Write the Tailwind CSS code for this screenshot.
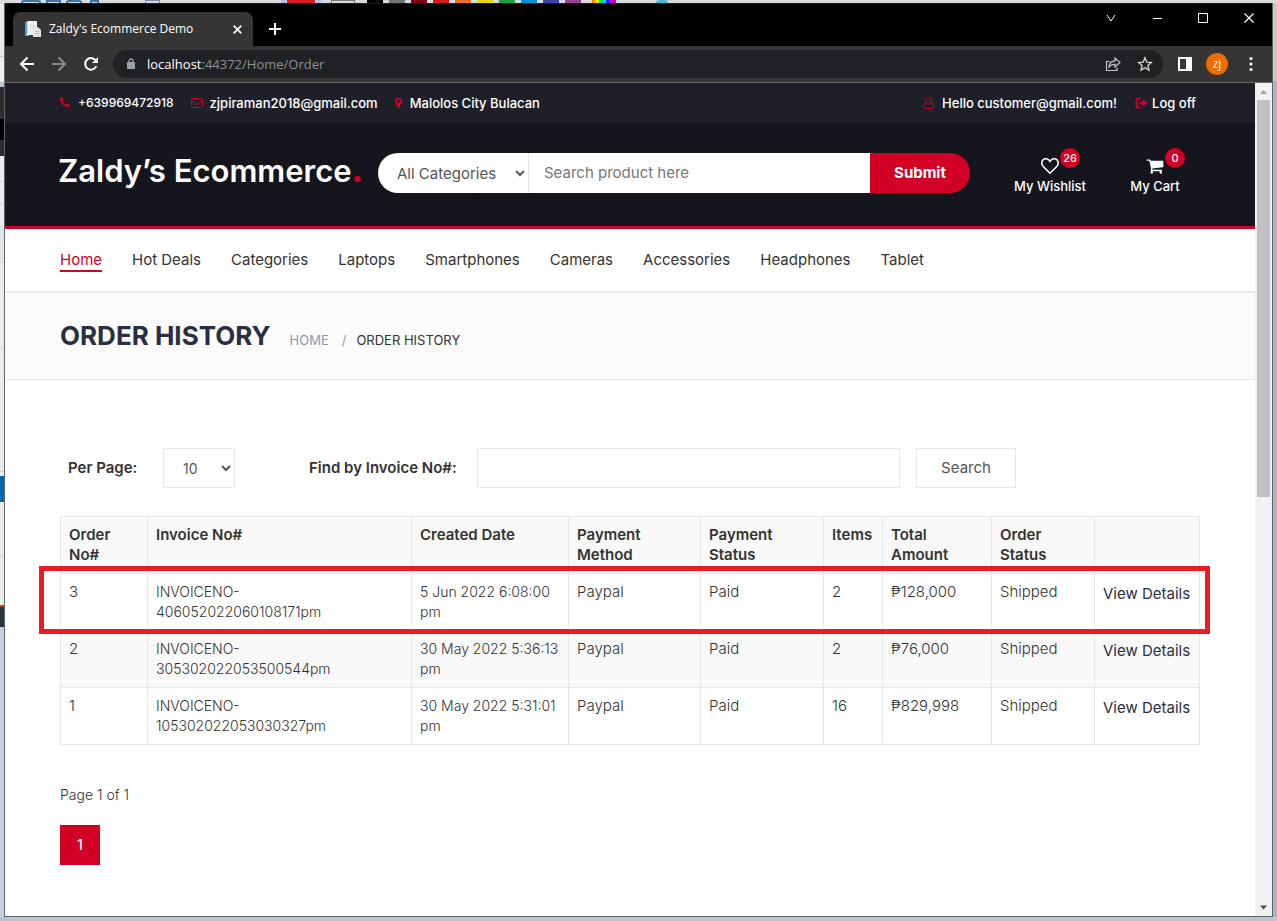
<!DOCTYPE html>
<html lang="en">
<head>
<meta charset="utf-8">
<meta name="viewport" content="width=device-width, initial-scale=1">
<title>Zaldy's Ecommerce Demo</title>
<script src="https://cdn.jsdelivr.net/npm/@tailwindcss/browser@4"></script>
</head>
<body class="flex min-h-screen flex-col bg-[#b9c3d2] font-['Inter',sans-serif] text-[15px] leading-5 text-[#333333]">

<!-- Slice of the paint program behind the browser -->
<div class="flex h-[3px] shrink-0 overflow-hidden bg-[#d9dadd]" aria-hidden="true">
  <div class="ml-[21px] h-[3px] w-5 rounded-t-full border-2 border-b-0 border-[#3b74a8]"></div>
  <div class="ml-[5px] h-[3px] w-[15px] border-2 border-b-0 border-[#3b74a8]"></div>
  <div class="ml-[5px] h-[3px] w-4 rounded-t border-2 border-b-0 border-[#3b74a8]"></div>
  <div class="ml-2 h-[3px] w-[9px] border-2 border-b-0 border-[#3b74a8]"></div>
  <div class="ml-[46px] h-[3px] w-[15px] border border-b-0 border-[#7a8ba8]"></div>
  <div class="ml-[121px] h-[3px] w-[5px] bg-[#a9c4e4]"></div>
  <div class="ml-[1px] h-[3px] w-7 bg-[#d61a20]"></div>
  <div class="ml-[1px] h-[3px] w-[5px] bg-[#a9c4e4]"></div>
  <div class="ml-[10px] h-[3px] w-6 border border-b-0 border-[#777777]"></div>
  <div class="ml-3 h-[3px] w-4 bg-black"></div>
  <div class="ml-[6px] h-[3px] w-4 bg-[#747474]"></div>
  <div class="ml-[6px] h-[3px] w-4 bg-[#7b0016]"></div>
  <div class="ml-[6px] h-[3px] w-4 bg-[#d61a20]"></div>
  <div class="ml-[6px] h-[3px] w-4 bg-[#e87324]"></div>
  <div class="ml-[6px] h-[3px] w-4 bg-[#e8da00]"></div>
  <div class="ml-[6px] h-[3px] w-4 bg-[#1f9e48]"></div>
  <div class="ml-[6px] h-[3px] w-4 bg-[#0099d6]"></div>
  <div class="ml-[6px] h-[3px] w-4 bg-[#3b43b3]"></div>
  <div class="ml-[6px] h-[3px] w-4 bg-[#964392]"></div>
  <div class="ml-[11px] flex h-[3px] w-6"><i class="flex-1 bg-[#ff8800]"></i><i class="flex-1 bg-[#ffee00]"></i><i class="flex-1 bg-[#22dd00]"></i><i class="flex-1 bg-[#00ddcc]"></i><i class="flex-1 bg-[#0022ff]"></i><i class="flex-1 bg-[#cc00ee]"></i><i class="flex-1 bg-[#ee0066]"></i></div>
  <div class="ml-10 h-[3px] w-3 rounded-t-full bg-[#4bbcd4]"></div>
</div>

<div class="flex flex-1">
  <!-- Slice of the windows to the left -->
  <div class="flex w-1 shrink-0 flex-col overflow-hidden bg-[#c5cfde]" aria-hidden="true">
    <div class="h-[53px] shrink-0 bg-[#e6e9ee]"></div>
    <div class="h-[26px] shrink-0 border-t border-[#c9ccd2] bg-[#eceef2]"></div>
    <div class="h-[5px] shrink-0 bg-[#b8c4d9]"></div>
    <div class="h-8 shrink-0 bg-[#2c2c2c]"></div>
    <div class="h-[21px] shrink-0 bg-black"></div>
    <div class="h-4 shrink-0 bg-[#2c2c2c]"></div>
    <div class="h-[26px] shrink-0 border-b border-[#d0d5d9] bg-[#e9eced]"></div>
    <div class="h-[23px] shrink-0 border-b border-[#d0d5d9] bg-[#e9eced]"></div>
    <div class="h-[22px] shrink-0 border-b border-[#d0d5d9] bg-[#e9eced]"></div>
    <div class="h-9 shrink-0 border-b border-[#d0d5d9] bg-[#dfe7eb]"></div>
    <div class="h-[86px] shrink-0 border-b border-[#cfd2d6] bg-[#eaebec]"></div>
    <div class="h-[123px] shrink-0 border-b border-[#cfd2d6] bg-[#eaebec]"></div>
    <div class="h-1 shrink-0 bg-[#eaebec]"></div>
    <div class="h-[26px] shrink-0 bg-[#0067b1]"></div>
    <div class="h-[55px] shrink-0 border-b border-[#cfd2d6] bg-[#eaebec]"></div>
    <div class="h-12 shrink-0 bg-[#eaebec]"></div>
    <div class="h-[2px] shrink-0 bg-[#b9481c]"></div>
    <div class="h-5 shrink-0 bg-[#24363d]"></div>
  </div>

  <!-- Browser window -->
  <div class="flex min-w-0 flex-1 flex-col border-r border-b border-l border-[#5f646b] bg-[#353535]">
    <div class="flex h-[43px] items-end border-t border-[#1c1c1c] bg-black pl-2 font-['Open_Sans',sans-serif]">
      <div class="flex h-[34px] w-60 items-center rounded-t-lg bg-[#353535] pr-2 pl-3 text-[12px] text-white">
        <svg class="h-4 w-4" viewBox="0 0 16 16" aria-hidden="true"><path d="M0 1h4v14H0z" fill="#5d9fcb"/><path d="M3 0h9v14H3z" fill="#f2f2f2"/><path d="M2 0h1v15H2z" fill="#c5dff0"/><path d="M5 4h5v1H5zM5 6h3v1H5z" fill="#c8cdd1"/><path d="M8 6h5l3 3v7H8z" fill="#dfe3e6"/><path d="M10 10h4v1h-4zM10 12h4v1h-4z" fill="#b8bfc5"/></svg>
        <span class="ml-2 flex-1 whitespace-nowrap">Zaldy's Ecommerce Demo</span>
        <button type="button" aria-label="Close tab" class="flex h-4 w-4 items-center justify-center"><svg class="h-[9px] w-[9px]" viewBox="0 0 9 9" stroke="#fff" stroke-width="1.7"><path d="M.7.7l7.6 7.6M8.3.7L.7 8.3"/></svg></button>
      </div>
      <button type="button" aria-label="New tab" class="mb-[11px] ml-4"><svg class="h-3 w-3" viewBox="0 0 12 12" stroke="#fff" stroke-width="2"><path d="M6 0v12M0 6h12"/></svg></button>
      <div class="mb-[23px] ml-auto flex items-center gap-9 pr-[18px]">
        <button type="button" aria-label="Search tabs"><svg class="h-[10px] w-[10px]" viewBox="0 0 10 10" fill="none" stroke="#fff"><path d="M1 2l4 6 4-6"/></svg></button>
        <button type="button" aria-label="Minimize"><svg class="h-[10px] w-[10px]" viewBox="0 0 10 10"><path d="M1 5h9v1H1z" fill="#fff"/></svg></button>
        <button type="button" aria-label="Maximize"><svg class="h-[10px] w-[10px]" viewBox="0 0 10 10" fill="none" stroke="#fff"><path d="M.5.5h9v9h-9z"/></svg></button>
        <button type="button" aria-label="Close"><svg class="h-[10px] w-[10px]" viewBox="0 0 10 10" fill="none" stroke="#fff" stroke-width="1.3"><path d="M.5.5l9 9M9.500.5l-9 9"/></svg></button>
      </div>
    </div>

    <div class="flex h-[37px] items-center border-b border-[#6a6a6a] pr-[14px] pl-[14px] font-['Open_Sans',sans-serif]">
      <button type="button" aria-label="Back"><svg class="h-4 w-4" viewBox="0 0 16 16" fill="none" stroke="#fff" stroke-width="2"><path d="M15 8H2M8.500 1.500L2 8l6.500 6.500"/></svg></button>
      <button type="button" aria-label="Forward" class="ml-4"><svg class="h-4 w-4" viewBox="0 0 16 16" fill="none" stroke="#8a8a8a" stroke-width="2"><path d="M1 8h13M7.500 1.500L14 8l-6.500 6.500"/></svg></button>
      <button type="button" aria-label="Reload" class="ml-4"><svg class="h-4 w-4" viewBox="0 0 16 16" fill="none" stroke="#fff" stroke-width="2"><path d="M13.300 10.200A5.800 5.800 0 1 1 12.500 4.200"/><path d="M15 1v6H9z" fill="#fff" stroke="none"/></svg></button>
      <div class="ml-[14px] flex h-7 flex-1 items-center rounded-full bg-[#202124] pr-[10px] pl-[14px] text-[13px] text-[#8d9094]">
        <svg class="h-3 w-2" viewBox="0 0 8 12" aria-hidden="true"><path d="M0 4h8v7H0z" fill="#9aa0a6"/><path d="M2 5V3a2 2 0 0 1 4 0v2" fill="none" stroke="#9aa0a6" stroke-width="1.300"/></svg>
        <span class="ml-3 flex-1"><span class="text-white">localhost</span>:44372/Home/Order</span>
        <button type="button" aria-label="Share"><svg class="h-4 w-4" viewBox="0 0 16 16" fill="none" stroke="#c2c4c7" stroke-width="1.200"><path d="M4.500 5.500H1.500v9h10.500v-3"/><path d="M4 11c.3-4 2.500-6 6-6.200V2l5 4.500-5 4.500V8.300C7.500 8.300 5.500 9 4 11z"/></svg></button>
        <button type="button" aria-label="Bookmark this page" class="ml-4"><svg class="h-4 w-4" viewBox="0 0 16 16" fill="none" stroke="#d5d6d8" stroke-width="1.300"><path d="M8 1.800l1.800 4.300 4.700.4-3.600 3 1.100 4.600L8 11.700l-4 2.400 1.100-4.600-3.600-3 4.700-.4z"/></svg></button>
      </div>
      <button type="button" aria-label="Side panel" class="ml-[15px]"><svg class="h-[14px] w-[14px]" viewBox="0 0 14 14"><path d="M0 0h14v14H0zM2 2v10h6V2z" fill="#fff" fill-rule="evenodd"/></svg></button>
      <button type="button" class="ml-[14px] flex h-[22px] w-[22px] items-center justify-center rounded-full bg-[#ef6c00] text-[12px] leading-none text-white">zj</button>
      <button type="button" aria-label="Menu" class="ml-4"><svg class="h-4 w-[14px]" viewBox="0 0 14 16" fill="#fff"><circle cx="7" cy="2.500" r="1.600"/><circle cx="7" cy="8" r="1.600"/><circle cx="7" cy="13.500" r="1.600"/></svg></button>
    </div>

    <div class="flex flex-1">
      <!-- Page -->
      <div class="min-w-0 flex-1 bg-white">
        <div class="bg-[#1e1f29] px-4 text-[13px] font-medium text-white">
          <div class="mx-auto flex h-10 max-w-[1140px] items-center">
            <ul class="flex items-center gap-[17px]">
              <li><a href="#" class="flex items-center gap-2 text-[12px]"><svg class="h-3 w-[10px]" viewBox="192 256 1408 1408" fill="#d10024"><path d="M1600 1240q0 27-10 70.5t-21 68.500q-21 50-122 106-94 51-186 51-27 0-53-3.500t-57.500-12.500-47-14.500-55.500-20.500-49-18q-98-35-175-83-127-79-264-216t-216-264q-48-77-83-175-3-9-18-49t-20.500-55.500-14.500-47-12.500-57.500-3.500-53q0-92 51-186 56-101 106-122 25-11 68.500-21t70.500-10q14 0 21 3 18 6 53 76 11 19 30 54t35 63.500 31 53.500q3 4 17.500 25t21.500 35.500 7 28.500q0 20-28.500 50t-62 55-62 53-28.500 46q0 9 5 22.500t8.500 20.500 14 24 11.500 19q76 137 174 235t235 174q2 1 19 11.500t24 14 20.500 8.500 22.500 5q18 0 46-28.500t53-62 55-62 50-28.500q14 0 28.500 7t35.500 21.500 25 17.500q25 15 53.500 31t63.500 35 54 30q70 35 76 53 3 7 3 21z"/></svg>+639969472918</a></li>
              <li><a href="#" class="flex items-center gap-[7px]"><svg class="h-3 w-3" viewBox="0 0 12 12" fill="none" stroke="#d10024"><rect x=".5" y="1.500" width="11" height="9" rx="1"/><path d="M.5 3.500L5 7.200q1 .8 2 0l4.500-3.700"/></svg>zjpiraman2018@gmail.com</a></li>
              <li><a href="#" class="flex items-center gap-2"><svg class="h-3 w-[7px]" viewBox="384 128 1024 1536" fill="#d10024"><path d="M1152 640q0-106-75-181t-181-75-181 75-75 181 75 181 181 75 181-75 75-181zm256 0q0 109-33 179l-364 774q-16 33-47.500 52t-67.500 19-67.500-19-46.500-52l-365-774q-33-70-33-179 0-212 150-362t362-150 362 150 150 362z"/></svg>Malolos City Bulacan</a></li>
            </ul>
            <ul class="ml-auto flex items-center gap-[18px] pr-1">
              <li><a href="#" class="flex items-center gap-2"><svg class="h-3 w-[11px]" viewBox="0 0 11 12" fill="none" stroke="#d10024"><path d="M5.500.6c1.800 0 3 1.200 3 3s-1.200 3.400-3 3.400-3-1.600-3-3.400 1.200-3 3-3z"/><path d="M2.900 6C1.300 6.300.5 7.500.5 9.400c0 1.300.8 2.100 2 2.100h6c1.200 0 2-.8 2-2.100 0-1.900-.8-3.100-2.400-3.400"/></svg>Hello customer@gmail.com!</a></li>
              <li><a href="#" class="flex items-center gap-1"><svg class="h-3 w-[13px]" viewBox="0 0 13 12" fill="#d10024"><path d="M5.500.5v2H3.400c-.6 0-.9.3-.9.900v5.200c0 .6.3.9.900.9h2.100v2H3.200C1.400 11.500.5 10.500.5 8.800V3.200C.5 1.500 1.400.5 3.200.5z"/><path d="M4.500 4.500H8V2l4.700 4L8 10V7.500H4.500z"/></svg>Log off</a></li>
            </ul>
          </div>
        </div>

        <header class="border-b-[3px] border-[#d10024] bg-[#15161d] px-4">
          <div class="mx-auto flex h-[103px] max-w-[1140px] items-center text-white">
            <a href="#" class="-ml-[2px] w-80 shrink-0 pb-2 text-[31px] leading-9 font-semibold whitespace-nowrap">Zaldy’s Ecommerce<span class="font-black text-[#d10024]">.</span></a>
            <form class="mt-[-3px] flex h-10 max-w-[592px] flex-1 text-[15px]">
              <select aria-label="Category" class="w-[151px] rounded-l-full border-r border-[#e4e7ed] bg-white pl-[15px] text-[#555555]"><option>All Categories</option></select>
              <input type="search" aria-label="Search product" placeholder="Search product here" class="min-w-0 flex-1 bg-white px-[15px] text-[#333333] placeholder:text-[#777777]">
              <button type="submit" class="w-[100px] rounded-r-full bg-[#d10024] font-bold">Submit</button>
            </form>
            <div class="ml-auto flex gap-[46px] pt-[2px] pr-[21px] text-[13px] leading-[18px] font-medium">
              <a href="#" class="relative flex w-[70px] flex-col items-center whitespace-nowrap"><svg class="mb-[2px] h-[18px] w-[18px]" viewBox="0 0 18 18" fill="none" stroke="#fff" stroke-width="1.600"><path d="M9 16.200L2.200 9.500C.3 7.500.4 4.200 2 2.800 4 1 7 1.500 9 4.300 11 1.500 14 1 16 2.800c1.600 1.400 1.700 4.700-.2 6.700z"/></svg>My Wishlist<span class="absolute -top-[9px] left-[45px] flex h-5 w-5 items-center justify-center rounded-full bg-[#d10024] text-[11px]">26</span></a>
              <a href="#" class="relative flex w-12 flex-col items-center whitespace-nowrap"><svg class="mb-[2px] h-[18px] w-[18px]" viewBox="0 128 1792 1536" fill="#fff"><path d="M704 1536q0 52-38 90t-90 38-90-38-38-90 38-90 90-38 90 38 38 90zm896 0q0 52-38 90t-90 38-90-38-38-90 38-90 90-38 90 38 38 90zm128-1088v512q0 24-16.500 42.500t-40.500 21.500l-1044 122q13 60 13 70 0 16-24 64h920q26 0 45 19t19 45-19 45-45 19h-1024q-26 0-45-19t-19-45q0-11 8-31.500t16-36 21.500-40 15.500-29.500l-177-823h-204q-26 0-45-19t-19-45 19-45 45-19h256q16 0 28.500 6.500t19.500 15.500 13 24.500 8 26 5.500 29.500 4.500 26h1201q26 0 45 19t19 45z"/></svg>My Cart<span class="absolute -top-[9px] left-[34px] flex h-5 w-5 items-center justify-center rounded-full bg-[#d10024] text-[11px]">0</span></a>
            </div>
          </div>
        </header>

        <nav class="border-b-2 border-[#e4e7ed] px-4">
          <ul class="mx-auto flex h-[62px] max-w-[1140px] items-center gap-[30px] whitespace-nowrap">
            <li><a href="#" class="block border-b-2 border-[#d10024] pt-[2px] text-[#d10024]">Home</a></li>
            <li><a href="#">Hot Deals</a></li>
            <li><a href="#">Categories</a></li>
            <li><a href="#">Laptops</a></li>
            <li><a href="#">Smartphones</a></li>
            <li><a href="#">Cameras</a></li>
            <li><a href="#">Accessories</a></li>
            <li><a href="#">Headphones</a></li>
            <li><a href="#">Tablet</a></li>
          </ul>
        </nav>

        <div class="border-b border-[#e4e7ed] bg-[#fbfbfc] px-4">
          <div class="mx-auto flex h-[86px] max-w-[1140px] items-baseline gap-[19px] pt-7">
            <h1 class="text-[26px] leading-[30px] font-bold text-[#2b2d42]">ORDER HISTORY</h1>
            <ol class="flex text-[13px]">
              <li><a href="#" class="text-[#8d99ae]">HOME</a></li>
              <li><span class="pr-[10px] pl-[13px] text-[#8d99ae]">/</span>ORDER HISTORY</li>
            </ol>
          </div>
        </div>

        <main class="px-4 pt-[68px] pb-[51px]">
          <div class="mx-auto max-w-[1140px]">
            <form class="flex h-10 items-center pl-2">
              <label for="per-page" class="w-[95px] font-semibold">Per Page:</label>
              <select id="per-page" class="h-10 w-[72px] border border-[#e4e7ed] bg-white pl-[15px] text-[14px] text-[#555555]"><option>10</option></select>
              <label for="invoice" class="ml-[74px] w-[168px] font-semibold whitespace-nowrap">Find by Invoice No#:</label>
              <input id="invoice" type="text" class="h-10 max-w-[423px] min-w-0 flex-1 border border-[#e4e7ed] px-[15px]">
              <button type="submit" class="ml-4 h-10 w-[100px] border border-[#e4e7ed] bg-white text-[#555555]">Search</button>
            </form>

            <div class="relative mt-7">
              <table class="w-full table-fixed border-collapse text-left [&_td]:border [&_td]:border-[#e4e7ed] [&_td]:p-2 [&_td]:align-top [&_th]:border [&_th]:border-[#e4e7ed] [&_th]:p-2 [&_th]:align-top [&_th]:font-semibold">
                <colgroup><col class="w-[87px]"><col class="w-[264px]"><col class="w-[157px]"><col class="w-[132px]"><col class="w-[123px]"><col class="w-[59px]"><col class="w-[109px]"><col class="w-[103px]"><col class="w-[105px]"></colgroup>
                <thead>
                  <tr class="bg-[#f9f9f9]"><th>Order<br>No#</th><th>Invoice No#</th><th>Created Date</th><th>Payment<br>Method</th><th>Payment<br>Status</th><th>Items</th><th>Total<br>Amount</th><th>Order<br>Status</th><td></td></tr>
                </thead>
                <tbody class="font-light">
                  <tr><td>3</td><td class="text-[14px]">INVOICENO-<br>406052022060108171pm</td><td class="text-[14px] whitespace-nowrap">5 Jun 2022 6:08:00<br>pm</td><td>Paypal</td><td>Paid</td><td>2</td><td>₱128,000</td><td>Shipped</td><td><a href="#" class="block pt-[2px] font-normal whitespace-nowrap text-[#2b2d42]">View Details</a></td></tr>
                  <tr class="bg-[#f9f9f9]"><td>2</td><td class="text-[14px]">INVOICENO-<br>305302022053500544pm</td><td class="text-[14px] whitespace-nowrap">30 May 2022 5:36:13<br>pm</td><td>Paypal</td><td>Paid</td><td>2</td><td>₱76,000</td><td>Shipped</td><td><a href="#" class="block pt-[2px] font-normal whitespace-nowrap text-[#2b2d42]">View Details</a></td></tr>
                  <tr><td>1</td><td class="text-[14px]">INVOICENO-<br>105302022053030327pm</td><td class="text-[14px] whitespace-nowrap">30 May 2022 5:31:01<br>pm</td><td>Paypal</td><td>Paid</td><td>16</td><td>₱829,998</td><td>Shipped</td><td><a href="#" class="block pt-[2px] font-normal whitespace-nowrap text-[#2b2d42]">View Details</a></td></tr>
                </tbody>
              </table>
              <!-- Marker round the newest order -->
              <div class="pointer-events-none absolute top-[50px] -right-[10px] -left-[21px] h-[68px] border-[5px] border-[#ed1c24]"></div>
            </div>

            <p class="mt-10 text-[14px] font-light">Page 1 of 1</p>
            <a href="#" aria-current="page" class="mt-5 flex h-10 w-10 items-center justify-center bg-[#d10024] text-[14px] font-medium text-white">1</a>
          </div>
        </main>
      </div>

      <!-- Scrollbar -->
      <div class="flex w-[17px] shrink-0 flex-col items-center bg-[#f1f1f1]" aria-hidden="true">
        <svg class="h-[17px] w-[17px]" viewBox="0 0 17 17"><path d="M5 11l3.500-4L12 11z" fill="#a3a3a3"/></svg>
        <div class="h-[397px] w-[13px] bg-[#c1c1c1]"></div>
        <svg class="mt-auto h-[17px] w-[17px]" viewBox="0 0 17 17"><path d="M5 6.500l3.500 4 3.500-4z" fill="#505050"/></svg>
      </div>
    </div>
  </div>

  <div class="flex w-1 shrink-0 flex-col bg-[#a9b4c5]" aria-hidden="true"><div class="h-[78px] bg-[#c9c9cb]"></div></div>
</div>
<div class="h-1 shrink-0" aria-hidden="true"></div>
</body>
</html>
